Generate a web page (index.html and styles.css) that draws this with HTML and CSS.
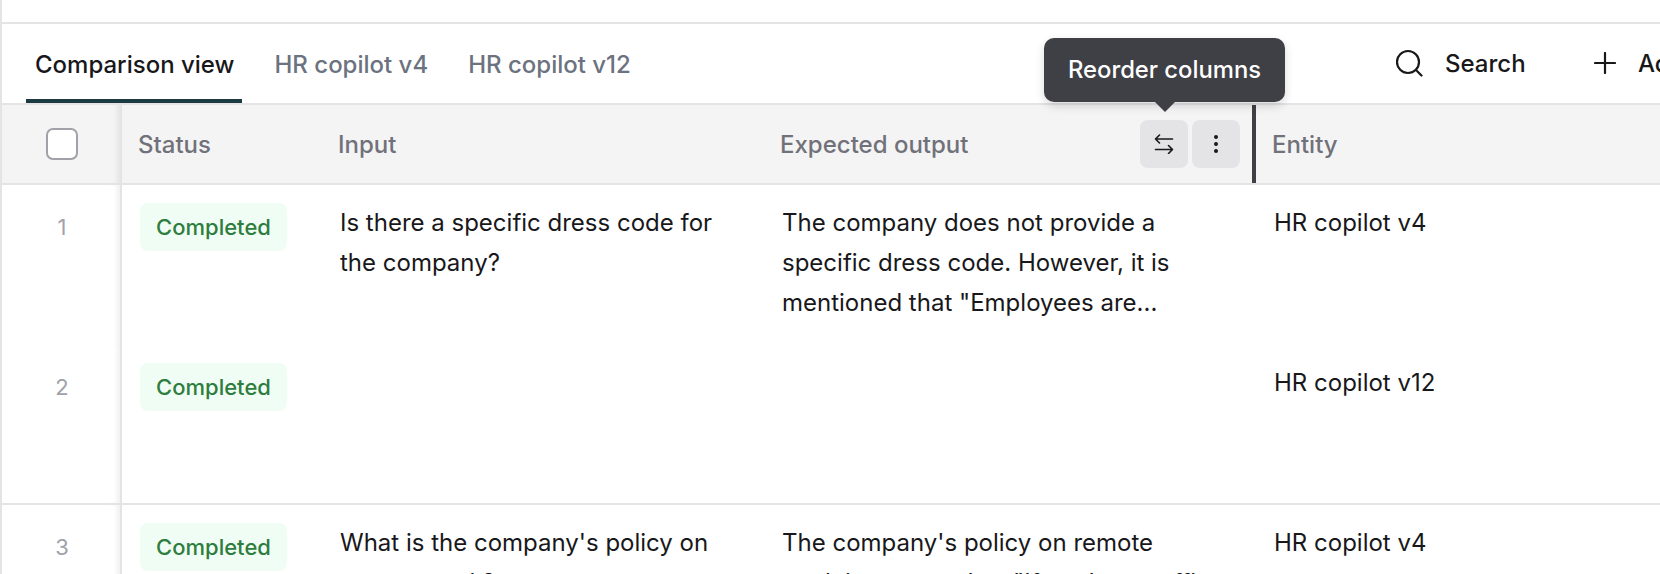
FILE: index.html
```html
<!DOCTYPE html>
<html lang="en">
<head>
<meta charset="utf-8">
<title>Comparison view</title>
<link rel="stylesheet" href="styles.css">
</head>
<body>
<div class="page">
  <div class="topbar"></div>
  <div class="toolbar">
    <nav class="tabs">
      <span class="tab active">Comparison view</span>
      <span class="tab">HR copilot v4</span>
      <span class="tab">HR copilot v12</span>
    </nav>
    <div class="actions">
      <span class="action action-search">
        <svg class="icon-search" viewBox="0 0 28 28" fill="none" stroke="#18181b" stroke-width="2.2" stroke-linecap="round"><circle cx="13" cy="13" r="11"/><path d="M21.5 21.5 L26.5 26.5"/></svg>
        Search
      </span>
      <span class="action action-add">
        <svg class="icon-plus" viewBox="0 0 22 22" fill="none" stroke="#18181b" stroke-width="2.2" stroke-linecap="round"><path d="M11 1V21M1 11H21"/></svg>
        Add
      </span>
    </div>
  </div>
  <div class="table">
    <div class="row head">
      <div class="cell idx"><span class="checkbox"></span></div>
      <div class="cell hcell">Status</div>
      <div class="cell hcell">Input</div>
      <div class="cell hcell hexpected">
        <span>Expected output</span>
        <span class="hbtns">
          <span class="hbtn"><svg viewBox="0 0 20 20" width="20" height="20" fill="none" stroke="#18181b" stroke-width="1.6" stroke-linecap="round" stroke-linejoin="round"><path d="M1.5 5H18.5M5.5 1 1.5 5 5.5 9"/><path d="M18.5 15.5H1.5M14.5 11.5 18.5 15.5 14.5 19.5"/></svg></span>
          <span class="hbtn"><svg viewBox="0 0 20 20" width="20" height="20" fill="#18181b"><circle cx="10" cy="3" r="2"/><circle cx="10" cy="10" r="2"/><circle cx="10" cy="17" r="2"/></svg></span>
        </span>
        <div class="tooltip">Reorder columns</div>
      </div>
      <div class="cell hcell hentity">Entity</div>
    </div>
    <div class="row">
      <div class="cell idx num">1</div>
      <div class="cell status"><span class="badge">Completed</span></div>
      <div class="cell text">Is there a specific dress code for the company?</div>
      <div class="cell text">The company does not provide a<br>specific dress code. However, it is<br>mentioned that "Employees are...</div>
      <div class="cell text entity">HR copilot v4</div>
    </div>
    <div class="row ruled">
      <div class="cell idx num">2</div>
      <div class="cell status"><span class="badge">Completed</span></div>
      <div class="cell text"></div>
      <div class="cell text"></div>
      <div class="cell text entity">HR copilot v12</div>
    </div>
    <div class="row">
      <div class="cell idx num">3</div>
      <div class="cell status"><span class="badge">Completed</span></div>
      <div class="cell text">What is the company's policy on<br>remote work?</div>
      <div class="cell text">The company's policy on remote<br>work is as stated as "If you're an office</div>
      <div class="cell text entity">HR copilot v4</div>
    </div>
  </div>
</div>
</body>
</html>
```
FILE: styles.css
```css
* { box-sizing: border-box; }
html, body { margin: 0; height: 100%; overflow: hidden; background: #fff; }
body { font-family: Inter, "Liberation Sans", sans-serif; color: #18181b; }

.page {
  height: 574px;
  width: 1660px;
  overflow: hidden;
  border-left: 2px solid #e4e4e7;
}

.topbar { height: 24px; border-bottom: 2px solid #e4e4e7; margin-left: -2px; }

.toolbar {
  height: 79px;
  display: flex;
  justify-content: space-between;
  white-space: nowrap;
}
.tabs { display: flex; gap: 23px; padding-left: 24px; }
.tab {
  height: 79px;
  padding: 5px 8px 0 9px;
  display: flex;
  align-items: center;
  font-size: 24px;
  font-weight: 500;
  color: #6b7280;
  border-bottom: 4px solid transparent;
}
.tab.active { color: #18181b; border-bottom-color: #1b3a42; }

.actions { display: flex; align-items: center; width: 264px; flex: none; overflow: hidden; margin-top: -1px; }
.action { display: flex; align-items: center; font-size: 24px; font-weight: 500; color: #18181b; flex: none; }
.action-search { gap: 22px; width: 198px; margin-left: -1px; }
.action-add { gap: 22px; margin-left: 1px; }
.icon-search { width: 28px; height: 28px; }
.icon-plus { width: 22px; height: 22px; }

.table { display: block; }
.row {
  display: grid;
  grid-template-columns: 120px 200px 442px 492px 1fr;
  height: 160px;
}
.row.ruled { border-bottom: 2px solid #e4e4e7; }
.row.head {
  height: 82px;
  background: #f4f4f5;
  border-top: 2px solid #e4e4e7;
  border-bottom: 2px solid #e4e4e7;
  color: #71717a;
  font-size: 24px;
  font-weight: 500;
}
.cell { min-width: 0; position: relative; }
.idx {
  display: flex;
  align-items: center;
  justify-content: center;
  border-right: 2px solid #e4e4e7;
  box-shadow: inset -7px 0 6px -5px rgba(0, 0, 0, 0.08);
  padding-left: 2px;
}
.checkbox {
  width: 32px;
  height: 32px;
  background: #fff;
  border: 2px solid #a1a1aa;
  border-radius: 7px;
}
.num {
  align-items: flex-start;
  padding-top: 27px;
  font-size: 22px;
  line-height: 30px;
  color: #a1a1aa;
}
.hcell { display: flex; align-items: center; padding: 1px 0 0 16px; }
.hexpected { justify-content: space-between; padding-right: 12px; border-right: 4px solid #3f3f46; }
.hbtns { display: flex; gap: 4px; margin-top: -1px; }
.hbtn {
  width: 48px;
  height: 48px;
  display: flex;
  align-items: center;
  justify-content: center;
  background: #e4e4e7;
  border-radius: 8px;
}
.tooltip {
  position: absolute;
  left: 280px;
  top: -67px;
  width: 241px;
  height: 64px;
  padding-bottom: 2px;
  display: flex;
  align-items: center;
  justify-content: center;
  background: #3f3f46;
  color: #fff;
  font-size: 23.8px;
  font-weight: 500;
  border-radius: 10px;
  box-shadow: 0 4px 10px rgba(0, 0, 0, 0.15);
}
.tooltip::after {
  content: "";
  position: absolute;
  left: 50%;
  bottom: -10px;
  margin-left: -10px;
  border-left: 10px solid transparent;
  border-right: 10px solid transparent;
  border-top: 10px solid #3f3f46;
}
.status { padding: 18px 0 0 18px; }
.badge {
  display: inline-flex;
  align-items: center;
  justify-content: center;
  width: 147px;
  height: 48px;
  background: #f0fdf4;
  color: #2e7d3e;
  font-size: 22px;
  font-weight: 500;
  border-radius: 8px;
}
.text {
  padding: 18px 18px 0;
  font-size: 24px;
  line-height: 40px;
  color: #18181b;
}
```
